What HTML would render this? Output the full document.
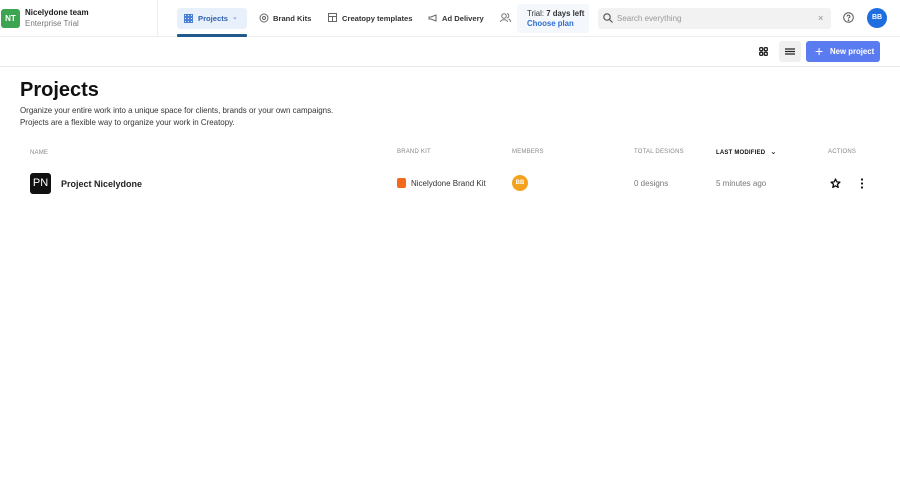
<!DOCTYPE html>
<html><head><meta charset="utf-8"><style>
*{box-sizing:border-box;margin:0;padding:0}
body{width:900px;height:484px;background:#fff;font-family:"Liberation Sans",sans-serif;color:#1a1a1a;position:relative;overflow:hidden}
.a{position:absolute}
.top{left:0;top:0;width:900px;height:37px;border-bottom:1px solid #eee}
.bar2{left:0;top:37px;width:900px;height:30px;border-bottom:1px solid #e8e8e8}
.nav{font-size:7.6px;font-weight:bold;color:#333}
.th{font-size:6px;color:#888;letter-spacing:.2px}
.td{font-size:8px;color:#777}
</style></head><body>
<div class="a top"></div>
<div class="a" style="left:157px;top:0;width:1px;height:37px;background:#eee"></div>
<div class="a" style="left:1px;top:9px;width:19px;height:19px;background:#3da551;border-radius:3px;color:#fff;font-size:8px;font-weight:bold;text-align:center;line-height:19px">NT</div>
<div class="a" style="left:25px;top:8px;font-size:8px;font-weight:bold">Nicelydone team</div>
<div class="a" style="left:25px;top:19px;font-size:8px;color:#777">Enterprise Trial</div>
<div class="a" style="left:177px;top:8px;width:70px;height:21px;background:#e8f1fb;border-radius:3px"></div>
<div class="a" style="left:177px;top:34px;width:70px;height:3px;background:#225a8c;border-radius:1px"></div>
<svg class="a" style="left:184px;top:14px" width="9" height="9"><g fill="none" stroke="#4a7fd6" stroke-width="1"><rect x=".5" y=".5" width="2" height="2"/><rect x="3.5" y=".5" width="2" height="2"/><rect x="6.5" y=".5" width="2" height="2"/><rect x=".5" y="3.5" width="2" height="2"/><rect x="3.5" y="3.5" width="2" height="2"/><rect x="6.5" y="3.5" width="2" height="2"/><rect x=".5" y="6.5" width="2" height="2"/><rect x="3.5" y="6.5" width="2" height="2"/><rect x="6.5" y="6.5" width="2" height="2"/></g></svg>
<div class="a nav" style="left:198px;top:14px;color:#2d5fb0">Projects</div>
<div class="a" style="left:232px;top:13px;font-size:7px;color:#4a7fd6">⌄</div>
<svg class="a" style="left:259px;top:13px" width="10" height="10"><circle cx="5" cy="5" r="4" fill="none" stroke="#666"/><circle cx="5" cy="5" r="1.5" fill="none" stroke="#666"/></svg>
<div class="a nav" style="left:273px;top:14px">Brand Kits</div>
<svg class="a" style="left:328px;top:13px" width="9" height="9" fill="none" stroke="#666"><rect x=".5" y=".5" width="8" height="8"/><path d="M.5 3.5h8M4.5 3.5v5"/></svg>
<div class="a nav" style="left:342px;top:14px">Creatopy templates</div>
<svg class="a" style="left:428px;top:14px" width="9" height="8" fill="none" stroke="#666"><path d="M1 3h2l5-2v6l-5-2H1z"/></svg>
<div class="a nav" style="left:442px;top:14px">Ad Delivery</div>
<svg class="a" style="left:500px;top:12px" width="11" height="11" fill="none" stroke="#777"><circle cx="4" cy="4" r="2.3"/><path d="M.5 10c0-3 7-3 7 0M7 1.5a2.3 2.3 0 010 4.5M8.5 7c1.5.5 2 1.5 2 3"/></svg>
<div class="a" style="left:517px;top:4px;width:72px;height:29px;background:#f4f7fc;border-radius:3px"></div>
<div class="a" style="left:527px;top:9px;font-size:7.8px;color:#333">Trial: <b>7 days left</b></div>
<div class="a" style="left:527px;top:19px;font-size:7.8px;color:#2d6fd0;font-weight:bold">Choose plan</div>
<div class="a" style="left:598px;top:8px;width:233px;height:21px;background:#f2f2f2;border-radius:3px"></div>
<svg class="a" style="left:603px;top:13px" width="10" height="10" fill="none" stroke="#555" stroke-width="1.2"><circle cx="4" cy="4" r="3.2"/><path d="M6.5 6.5l3 3"/></svg>
<div class="a" style="left:617px;top:14px;font-size:8px;color:#999">Search everything</div>
<div class="a" style="left:818px;top:13px;font-size:9px;color:#888">×</div>
<svg class="a" style="left:843px;top:12px" width="11" height="11" fill="none" stroke="#555"><circle cx="5.5" cy="5.5" r="4.8"/><path d="M4 4.5a1.5 1.5 0 113 .3c-.5.7-1.5.8-1.5 1.8"/><circle cx="5.5" cy="8.3" r=".4" fill="#555"/></svg>
<div class="a" style="left:867px;top:8px;width:20px;height:20px;border-radius:50%;background:#1f6ee0;color:#fff;font-size:7px;font-weight:bold;text-align:center;line-height:20px">BB</div>
<div class="a bar2"></div>
<svg class="a" style="left:759px;top:47px" width="9" height="9" fill="none" stroke="#222" stroke-width="1.3"><rect x=".7" y=".7" width="3" height="3" rx=".8"/><rect x="5.3" y=".7" width="3" height="3" rx=".8"/><rect x=".7" y="5.3" width="3" height="3" rx=".8"/><rect x="5.3" y="5.3" width="3" height="3" rx=".8"/></svg>
<div class="a" style="left:779px;top:41px;width:22px;height:21px;background:#f0f0f0;border-radius:3px"></div>
<svg class="a" style="left:785px;top:48px" width="10" height="7" stroke="#222" stroke-width="1.2"><path d="M0 1h10M0 3.5h10M0 6h10"/></svg>
<div class="a" style="left:806px;top:41px;width:74px;height:21px;background:#5b7cf0;border-radius:3px"></div>
<div class="a" style="left:815px;top:42px;font-size:14px;color:#fff;line-height:18px">+</div>
<div class="a" style="left:830px;top:47px;font-size:7.8px;color:#fff;font-weight:bold">New project</div>
<div class="a" style="left:20px;top:79px;font-size:20px;font-weight:bold;color:#111">Projects</div>
<div class="a" style="left:20px;top:105px;font-size:7.95px;color:#333;line-height:12px">Organize your entire work into a unique space for clients, brands or your own campaigns.<br>Projects are a flexible way to organize your work in Creatopy.</div>
<div class="a th" style="left:30px;top:150px">NAME</div>
<div class="a th" style="left:397px;top:149px">BRAND KIT</div>
<div class="a th" style="left:512px;top:149px">MEMBERS</div>
<div class="a th" style="left:634px;top:149px">TOTAL DESIGNS</div>
<div class="a th" style="left:716px;top:150px;color:#111;font-weight:bold">LAST MODIFIED</div>
<div class="a" style="left:770px;top:147px;font-size:8px;color:#111">⌄</div>
<div class="a th" style="left:828px;top:149px">ACTIONS</div>
<div class="a" style="left:30px;top:173px;width:21px;height:21px;background:#111;border-radius:3px;color:#fff;font-size:11px;text-align:center;line-height:21px">PN</div>
<div class="a" style="left:61px;top:179px;font-size:9px;font-weight:bold;color:#222">Project Nicelydone</div>
<div class="a" style="left:397px;top:178px;width:9px;height:10px;background:#f26a1b;border-radius:2px"></div>
<div class="a td" style="left:411px;top:179px;color:#333">Nicelydone Brand Kit</div>
<div class="a" style="left:512px;top:175px;width:16px;height:16px;border-radius:50%;background:#f3a21d;color:#fff;font-size:6px;text-align:center;line-height:16px;font-weight:bold">BB</div>
<div class="a td" style="left:634px;top:179px">0 designs</div>
<div class="a td" style="left:716px;top:179px">5 minutes ago</div>
<svg class="a" style="left:830px;top:178px" width="11" height="11" fill="none" stroke="#111" stroke-width="1.3" stroke-linejoin="round"><path d="M5.5 1l1.3 2.9 3.1.3-2.4 2.1.7 3.1-2.7-1.6-2.7 1.6.7-3.1L1.1 4.2l3.1-.3z"/></svg>
<svg class="a" style="left:860px;top:178px" width="4" height="11" fill="#111"><circle cx="2" cy="1.5" r="1.1"/><circle cx="2" cy="5.5" r="1.1"/><circle cx="2" cy="9.5" r="1.1"/></svg>
</body></html>
